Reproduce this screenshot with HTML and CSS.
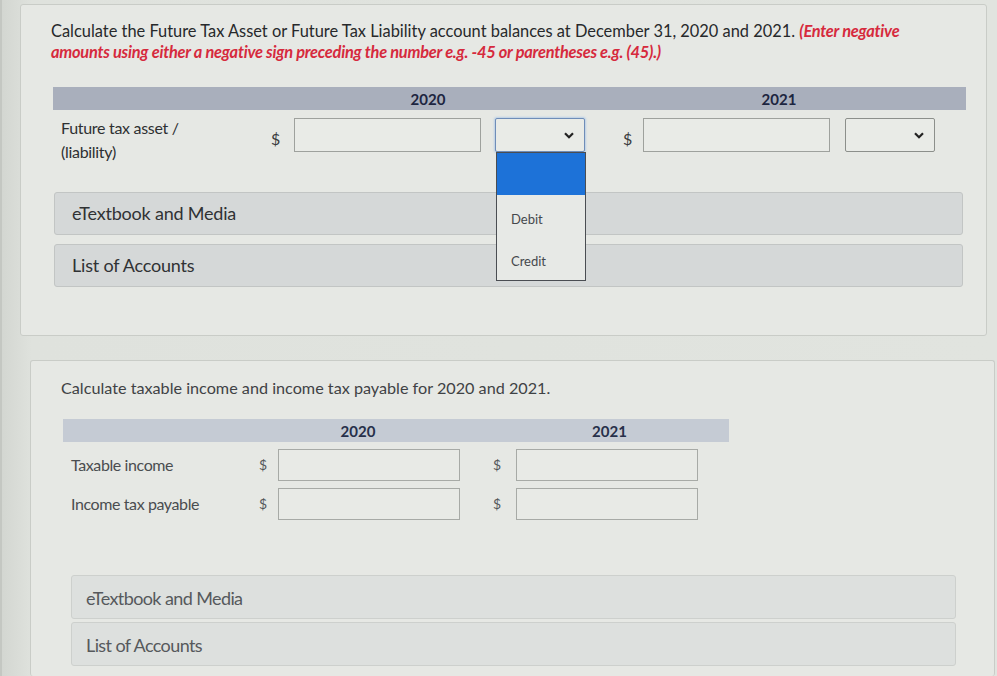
FILE: index.html
```html
<!DOCTYPE html>
<html>
<head>
<meta charset="utf-8">
<link rel="stylesheet" href="styles.css">
</head>
<body>
<div class="page">
  <section class="card card-one">
    <p class="prompt">Calculate the Future Tax Asset or Future Tax Liability account balances at December 31, 2020 and 2021. <span class="note">(Enter negative</span><br><span class="note">amounts using either a negative sign preceding the number e.g. -45 or parentheses e.g. (45).)</span></p>

    <div class="grid1 head1">
      <div class="h-2020">2020</div>
      <div class="h-2021">2021</div>
    </div>
    <div class="grid1 row1">
      <div class="label">Future tax asset /<br>(liability)</div>
      <div class="dollar">$</div>
      <div class="input"></div>
      <div class="gap"></div>
      <div class="select focused">
        <svg class="chev" viewBox="0 0 10 7" width="10" height="7"><path d="M1 1.2 L5 5.2 L9 1.2" fill="none" stroke="#222" stroke-width="2.2"/></svg>
        <div class="menu">
          <div class="opt-blank"></div>
          <div class="opt">Debit</div>
          <div class="opt">Credit</div>
        </div>
      </div>
      <div class="gap"></div>
      <div class="dollar">$</div>
      <div class="input"></div>
      <div class="gap"></div>
      <div class="select">
        <svg class="chev" viewBox="0 0 10 7" width="10" height="7"><path d="M1 1.2 L5 5.2 L9 1.2" fill="none" stroke="#222" stroke-width="2.2"/></svg>
      </div>
    </div>

    <div class="links links-one">
      <div class="link">eTextbook and Media</div>
      <div class="link">List of Accounts</div>
    </div>
  </section>

  <section class="card card-two">
    <p class="prompt2">Calculate taxable income and income tax payable for 2020 and 2021.</p>
    <div class="grid2 head2">
      <div class="h2-2020">2020</div>
      <div class="h2-2021">2021</div>
    </div>
    <div class="grid2 row2">
      <div class="label2">Taxable income</div>
      <div class="dollar2">$</div>
      <div class="input2"></div>
      <div></div>
      <div class="dollar2">$</div>
      <div class="input2"></div>
    </div>
    <div class="grid2 row2">
      <div class="label2">Income tax payable</div>
      <div class="dollar2">$</div>
      <div class="input2"></div>
      <div></div>
      <div class="dollar2">$</div>
      <div class="input2"></div>
    </div>
    <div class="links links-two">
      <div class="link2">eTextbook and Media</div>
      <div class="link2">List of Accounts</div>
    </div>
  </section>
</div>
</body>
</html>
```

FILE: styles.css
```css
* { box-sizing: border-box; }
html, body { margin: 0; padding: 0; }
body {
  width: 997px;
  height: 676px;
  overflow: hidden;
  background: #dcdfda;
  font-family: Lato, "Open Sans", sans-serif;
  color: #2b2d2e;
}
.page {
  height: 676px;
  padding: 4px 0 0 18px;
  border-left: 2px solid #c4c7c2;
  background: linear-gradient(90deg, #d3d6d1 0, #dfe2dd 30px, #e1e4df 100%);
  display: flex;
  flex-direction: column;
}
.card {
  background: #e6e8e4;
  border: 1px solid #c9ccc7;
  border-radius: 3px;
}
.card-one {
  width: 967px;
  height: 332px;
  padding: 15px 0 0 30px;
}
.prompt {
  margin: 0;
  width: 900px;
  font-size: 16.4px;
  line-height: 21px;
  letter-spacing: 0;
  color: #27292b;
}
.note {
  color: #d62a3d;
  font-weight: 700;
  font-style: italic;
  letter-spacing: -0.25px;
}

/* table 1 */
.grid1 {
  display: grid;
  grid-template-columns: 218px 23px 187px 14px 90px 38px 20px 187px 15px 90px 1fr;
  width: 913px;
  margin-left: 2px;
}
.head1 {
  margin-top: 25px;
  height: 23px;
  background: #a9afbc;
  font-weight: 700;
  font-size: 15px;
  color: #1d2540;
  align-items: center;
}
.h-2020 { grid-column: 2 / 6; text-align: center; }
.h-2021 { grid-column: 7 / 11; text-align: center; }
.row1 {
  height: 82px;
  padding-top: 6px;
  align-items: start;
}
.label {
  padding: 0 0 0 8px;
  font-size: 16px;
  line-height: 24px;
  letter-spacing: -0.3px;
  color: #2e3032;
}
.dollar {
  padding-top: 13px;
  font-size: 16px;
  color: #3a3c3e;
}
.input {
  height: 34px;
  margin-top: 2px;
  background: #e9ebe7;
  border: 1px solid #9ea19d;
}
.select {
  position: relative;
  height: 34px;
  margin-top: 2px;
  background: #e9ebe7;
  border: 1px solid #8c8f8b;
  border-radius: 2px;
}
.select.focused {
  border: 1px solid #6f8db8;
  box-shadow: 0 0 2px 1px #b9cfe6;
}
.chev {
  position: absolute;
  right: 10px;
  top: 13px;
}
.menu {
  position: absolute;
  left: 0;
  top: 33px;
  width: 90px;
  height: 129px;
  background: #e7e9e6;
  border: 1.5px solid #4a4d52;
  z-index: 3;
}
.opt-blank {
  height: 42px;
  background: #1d72d8;
}
.opt {
  height: 42px;
  padding: 16px 0 0 14px;
  font-size: 13px;
  color: #45484c;
}

/* link boxes */
.links {
  display: flex;
  flex-direction: column;
  gap: 9px;
}
.links-one {
  margin-left: 3px;
  width: 909px;
}
.link {
  height: 43px;
  padding: 9px 0 0 17px;
  background: #d5d8d8;
  border: 1px solid #c2c5c4;
  border-radius: 3px;
  font-size: 18px;
  color: #303234;
  letter-spacing: -0.2px;
}

/* card two */
.card-two {
  margin-top: 24px;
  margin-left: 10px;
  width: 965px;
  flex: 1;
  padding: 17px 0 0 30px;
  border-bottom: none;
}
.prompt2 {
  margin: 0;
  font-size: 16.2px;
  line-height: 20px;
  letter-spacing: 0;
  color: #3f4245;
}
.grid2 {
  display: grid;
  grid-template-columns: 193px 22px 182px 30px 26px 182px 31px;
  width: 666px;
  margin-left: 2px;
}
.head2 {
  margin-top: 21px;
  height: 23px;
  background: #c5cbd4;
  font-weight: 700;
  font-size: 15px;
  color: #27304a;
  align-items: center;
}
.h2-2020 { grid-column: 2 / 4; text-align: center; }
.h2-2021 { grid-column: 5 / 8; text-align: center; }
.row2 {
  margin-top: 6px;
  height: 33px;
  align-items: center;
}
.row2 + .row2 { margin-top: 6px; }
.label2 {
  padding-left: 8px;
  font-size: 16px;
  letter-spacing: -0.4px;
  color: #4a4d50;
}
.dollar2 {
  font-size: 14px;
  color: #54575a;
  padding-left: 3px;
}
.input2 {
  height: 32px;
  background: #e8eae6;
  border: 1px solid #a7aaa6;
}
.links-two {
  margin-top: 55px;
  margin-left: 10px;
  width: 885px;
  gap: 3px;
}
.link2 {
  height: 44px;
  padding: 11px 0 0 14px;
  background: #dde0de;
  border: 1px solid #cdd0cd;
  border-radius: 3px;
  font-size: 18px;
  color: #56595c;
  letter-spacing: -0.6px;
}
```
